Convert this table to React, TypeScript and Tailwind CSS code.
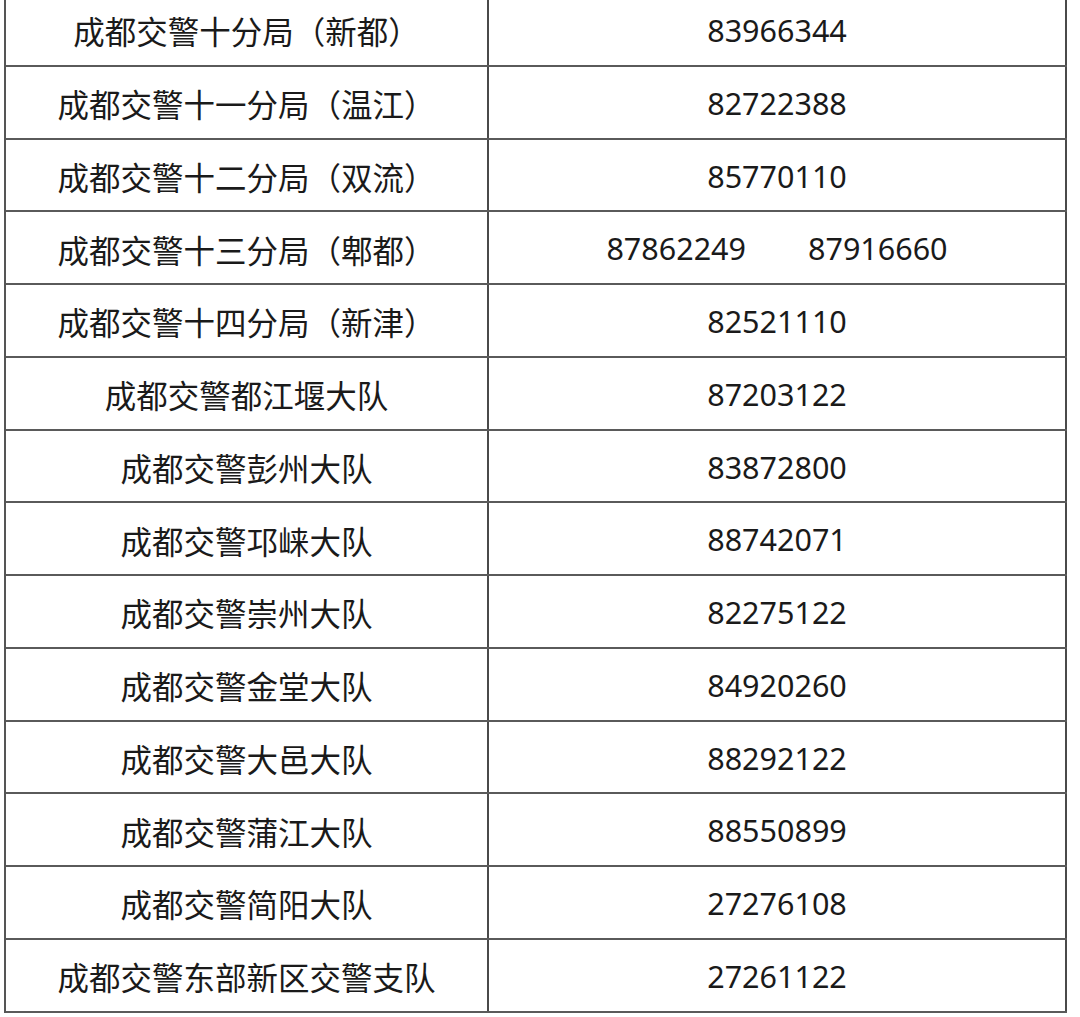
import React from 'react';

interface Row {
  name: string;
  phones: string[];
}

const rows: Row[] = [
  { name: '成都交警十分局（新都）', phones: ['83966344'] },
  { name: '成都交警十一分局（温江）', phones: ['82722388'] },
  { name: '成都交警十二分局（双流）', phones: ['85770110'] },
  { name: '成都交警十三分局（郫都）', phones: ['87862249', '87916660'] },
  { name: '成都交警十四分局（新津）', phones: ['82521110'] },
  { name: '成都交警都江堰大队', phones: ['87203122'] },
  { name: '成都交警彭州大队', phones: ['83872800'] },
  { name: '成都交警邛崃大队', phones: ['88742071'] },
  { name: '成都交警崇州大队', phones: ['82275122'] },
  { name: '成都交警金堂大队', phones: ['84920260'] },
  { name: '成都交警大邑大队', phones: ['88292122'] },
  { name: '成都交警蒲江大队', phones: ['88550899'] },
  { name: '成都交警简阳大队', phones: ['27276108'] },
  { name: '成都交警东部新区交警支队', phones: ['27261122'] },
];

export default function App() {
  return (
    <div className="w-[1080px] h-[1017px] overflow-hidden bg-white">
      <div className="mt-[-6px] ml-[4px] w-[1063px] border-l-2 border-[#555]">
        {rows.map((row) => (
          <div key={row.name} className="grid grid-cols-[483px_578px] h-[72.77px] border-b-2 border-[#5a5a5a]">
            <div
              className="flex items-center justify-center pt-[3px] border-r-2 border-[#4a4a4a] text-[31.5px] text-[#1a1a1a]"
              style={{ fontFamily: '"Noto Sans CJK SC", "Noto Sans", sans-serif' }}
            >
              {row.name}
            </div>
            <div
              className="flex items-center justify-center gap-[62px] pt-[3px] border-r-2 border-[#4a4a4a] text-[30.5px] text-[#1a1a1a]"
              style={{ fontFamily: '"Noto Sans", sans-serif' }}
            >
              {row.phones.map((p) => (
                <span key={p}>{p}</span>
              ))}
            </div>
          </div>
        ))}
      </div>
    </div>
  );
}
